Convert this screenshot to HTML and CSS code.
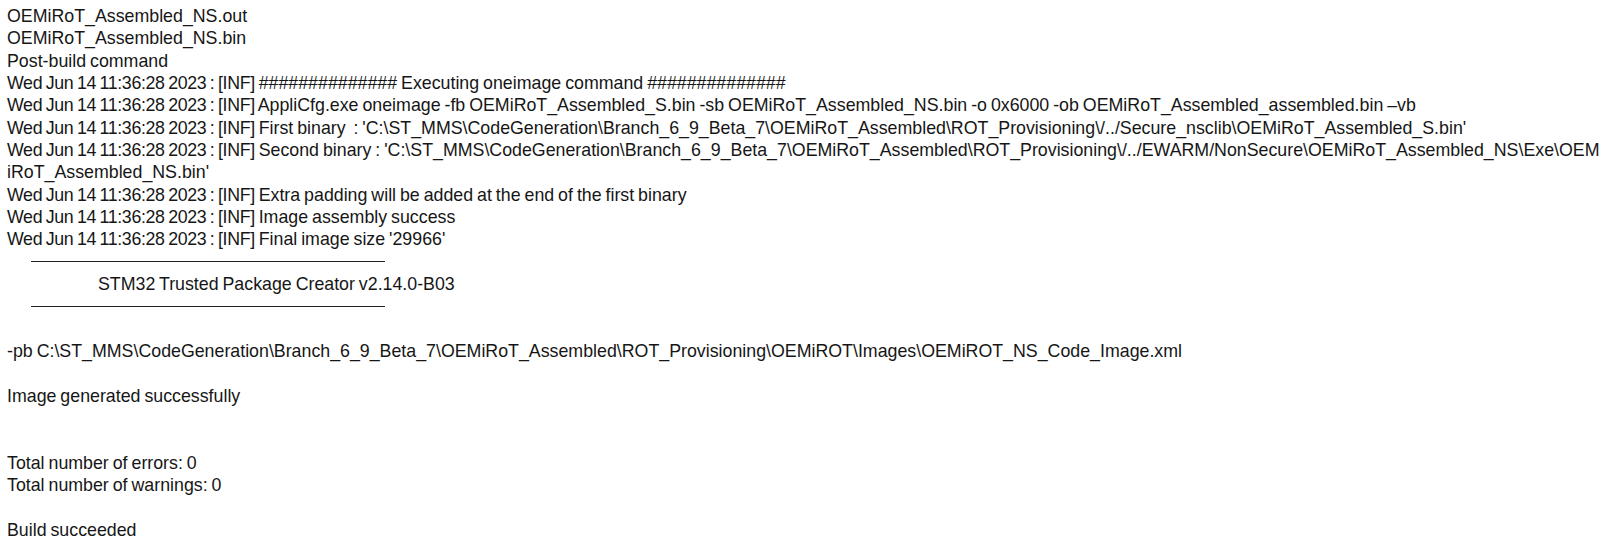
FILE: index.html
```html
<!DOCTYPE html>
<html>
<head>
<meta charset="utf-8">
<link rel="stylesheet" href="styles.css">
</head>
<body>
<div class="log">
  <div class="line">OEMiRoT_Assembled_NS.out</div>
  <div class="line">OEMiRoT_Assembled_NS.bin</div>
  <div class="line">Post-build command</div>
  <div class="line"><span class="ts">Wed Jun 14 11:36:28 2023 : [INF]</span> ############## Executing oneimage command ##############</div>
  <div class="line"><span class="ts">Wed Jun 14 11:36:28 2023 : [INF]</span> AppliCfg.exe oneimage -fb OEMiRoT_Assembled_S.bin -sb OEMiRoT_Assembled_NS.bin -o 0x6000 -ob OEMiRoT_Assembled_assembled.bin –vb</div>
  <div class="line"><span class="ts">Wed Jun 14 11:36:28 2023 : [INF]</span> First binary &nbsp;: 'C:\ST_MMS\CodeGeneration\Branch_6_9_Beta_7\OEMiRoT_Assembled\ROT_Provisioning\/../Secure_nsclib\OEMiRoT_Assembled_S.bin'</div>
  <div class="line wrap"><span class="ts">Wed Jun 14 11:36:28 2023 : [INF]</span> Second binary : 'C:\ST_MMS\CodeGeneration\Branch_6_9_Beta_7\OEMiRoT_Assembled\ROT_Provisioning\/../EWARM/NonSecure\OEMiRoT_Assembled_NS\Exe\OEMiRoT_Assembled_NS.bin'</div>
  <div class="line"><span class="ts">Wed Jun 14 11:36:28 2023 : [INF]</span> Extra padding will be added at the end of the first binary</div>
  <div class="line"><span class="ts">Wed Jun 14 11:36:28 2023 : [INF]</span> Image assembly success</div>
  <div class="line"><span class="ts">Wed Jun 14 11:36:28 2023 : [INF]</span> Final image size '29966'</div>
  <div class="banner">
    <div class="rule"></div>
    <div class="banner-title">STM32 Trusted Package Creator v2.14.0-B03</div>
    <div class="rule"></div>
  </div>
  <div class="line empty"></div>
  <div class="line">-pb C:\ST_MMS\CodeGeneration\Branch_6_9_Beta_7\OEMiRoT_Assembled\ROT_Provisioning\OEMiROT\Images\OEMiROT_NS_Code_Image.xml</div>
  <div class="line empty"></div>
  <div class="line">Image generated successfully</div>
  <div class="line empty"></div>
  <div class="line empty"></div>
  <div class="line">Total number of errors: 0</div>
  <div class="line">Total number of warnings: 0</div>
  <div class="line empty"></div>
  <div class="line">Build succeeded</div>
</div>
</body>
</html>
```
FILE: styles.css
```css
html, body {
  margin: 0;
  padding: 0;
  background: #ffffff;
}

.log {
  width: 1594px;
  padding: 5px 0 0 7px;
  font-family: "Liberation Sans", Arial, sans-serif;
  font-size: 17.8px;
  line-height: 22.33px;
  word-spacing: -1px;
  color: #161616;
}

.line {
  white-space: pre-wrap;
}

.ts {
  letter-spacing: -0.36px;
}

.line.wrap {
  word-break: break-all;
}

.line.empty {
  height: 22.33px;
}

.banner {
  display: flex;
  flex-direction: column;
}

.rule {
  height: 22.33px;
  width: 354px;
  margin-left: 24px;
  display: flex;
  align-items: center;
}

.rule::before {
  content: "";
  display: block;
  width: 100%;
  height: 1px;
  background: #222222;
}

.banner-title {
  padding-left: 91px;
  height: 22.33px;
}
```
